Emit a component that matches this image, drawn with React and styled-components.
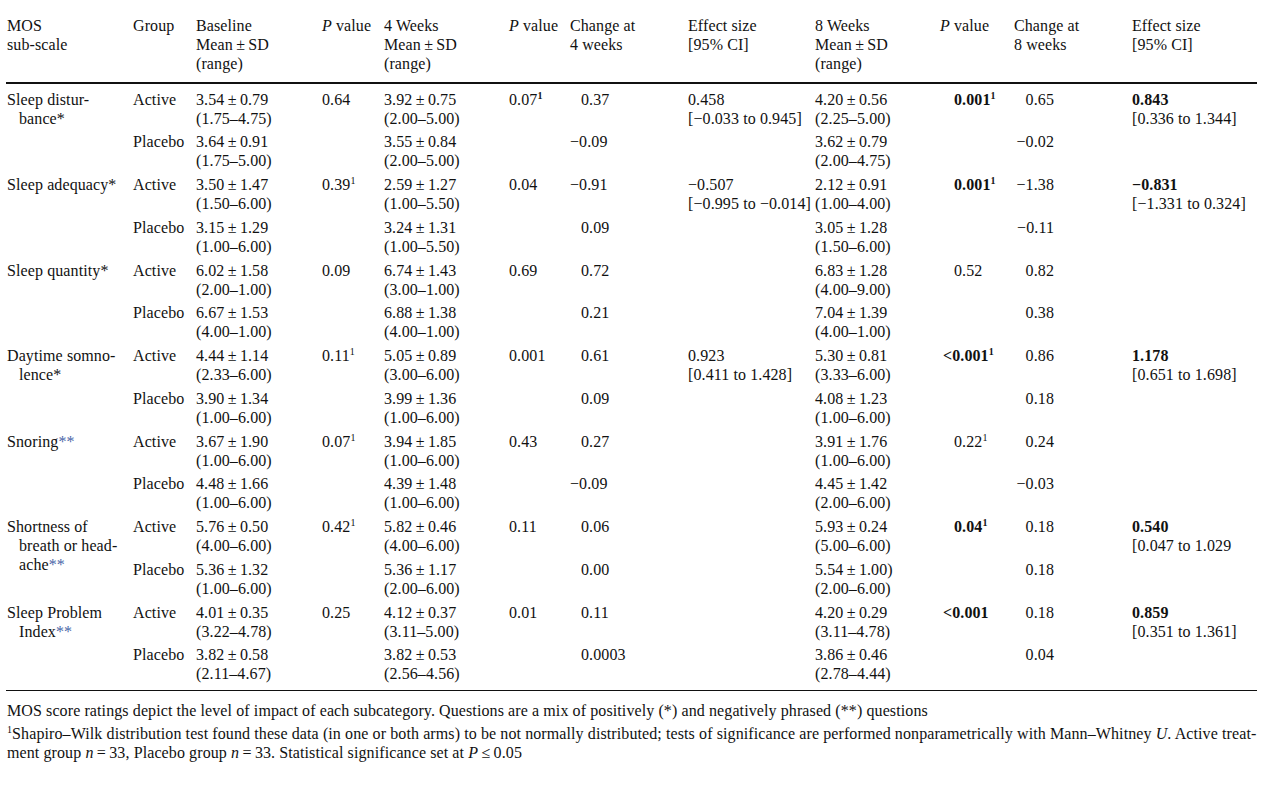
import React from "react";
import styled, { createGlobalStyle } from "styled-components";

const GlobalStyle = createGlobalStyle`
  body {
    margin: 0;
    background: #fff;
    color: #111;
    font-family: "Liberation Serif", "Times New Roman", serif;
    font-size: 16px;
    letter-spacing: 0.1px;
  }
`;

const COLS = "126px 63px 126px 62px 125px 61px 118px 127px 125px 74px 118px 125px";

const Page = styled.div`
  width: 1251px;
  padding: 15.5px 0 0 6px;
  line-height: 19px;
`;

const HeadRow = styled.div`
  display: grid;
  grid-template-columns: ${COLS};
  padding-bottom: 9.5px;
  border-bottom: 2px solid #111;
`;

const HeadCell = styled.div`
  padding-left: 1px;
  white-space: nowrap;
`;

const Body = styled.div`
  display: grid;
  grid-template-columns: ${COLS};
  grid-auto-rows: 42.77px;
  padding: 3.5px 0 4px;
  border-bottom: 1.2px solid #111;
`;

const Cell = styled.div`
  padding: 2px 0 0 ${(p) => p.$pl ?? 1}px;
  white-space: nowrap;
  font-weight: ${(p) => (p.$bold ? 700 : 400)};
  text-align: ${(p) => (p.$right ? "right" : "left")};
  padding-right: ${(p) => p.$pr ?? 0}px;
`;

const Measure = styled(Cell)`
  grid-row: span 2;
`;

const Indent = styled.span`
  display: block;
  padding-left: 12px;
`;

const Hang = styled.span`
  margin-left: ${(p) => p.$w}px;
`;

const Sup = styled.sup`
  font-size: 10px;
  line-height: 0;
  vertical-align: 6px;
  font-weight: ${(p) => (p.$bold ? 700 : 400)};
`;

const Stars = styled.span`
  color: #4a66a8;
`;

const Footer = styled.div`
  padding-top: 10px;
`;

const Note = styled.p`
  margin: 0 0 4px 1px;
  white-space: nowrap;
`;

const I = styled.i``;

const pm = (a, b) => `${a}\u2009±\u2009${b}`;

const data = [
  {
    name: ["Sleep distur-", "bance*"],
    rows: [
      {
        group: "Active", base: ["3.54", "0.79", "1.75–4.75"], bp: "0.64", bs: false,
        w4: ["3.92", "0.75", "2.00–5.00"], p4: "0.07", p4s: "b", c4: "0.37",
        es: ["0.458", "[−0.033 to 0.945]"],
        w8: ["4.20", "0.56", "2.25–5.00"], p8: "0.001", p8b: true, p8s: "b", c8: "0.65",
        es8: ["0.843", "[0.336 to 1.344]"],
      },
      {
        group: "Placebo", base: ["3.64", "0.91", "1.75–5.00"],
        w4: ["3.55", "0.84", "2.00–5.00"], c4: "−0.09",
        w8: ["3.62", "0.79", "2.00–4.75"], c8: "−0.02",
      },
    ],
  },
  {
    name: ["Sleep adequacy*"],
    rows: [
      {
        group: "Active", base: ["3.50", "1.47", "1.50–6.00"], bp: "0.39", bs: "n",
        w4: ["2.59", "1.27", "1.00–5.50"], p4: "0.04", c4: "−0.91",
        es: ["−0.507", "[−0.995 to −0.014]"],
        w8: ["2.12", "0.91", "1.00–4.00"], p8: "0.001", p8b: true, p8s: "b", c8: "−1.38",
        es8: ["−0.831", "[−1.331 to 0.324]"],
      },
      {
        group: "Placebo", base: ["3.15", "1.29", "1.00–6.00"],
        w4: ["3.24", "1.31", "1.00–5.50"], c4: "0.09",
        w8: ["3.05", "1.28", "1.50–6.00"], c8: "−0.11",
      },
    ],
  },
  {
    name: ["Sleep quantity*"],
    rows: [
      {
        group: "Active", base: ["6.02", "1.58", "2.00–1.00"], bp: "0.09",
        w4: ["6.74", "1.43", "3.00–1.00"], p4: "0.69", c4: "0.72",
        w8: ["6.83", "1.28", "4.00–9.00"], p8: "0.52", c8: "0.82",
      },
      {
        group: "Placebo", base: ["6.67", "1.53", "4.00–1.00"],
        w4: ["6.88", "1.38", "4.00–1.00"], c4: "0.21",
        w8: ["7.04", "1.39", "4.00–1.00"], c8: "0.38",
      },
    ],
  },
  {
    name: ["Daytime somno-", "lence*"],
    rows: [
      {
        group: "Active", base: ["4.44", "1.14", "2.33–6.00"], bp: "0.11", bs: "n",
        w4: ["5.05", "0.89", "3.00–6.00"], p4: "0.001", c4: "0.61",
        es: ["0.923", "[0.411 to 1.428]"],
        w8: ["5.30", "0.81", "3.33–6.00"], p8: "<0.001", p8b: true, p8s: "b", c8: "0.86",
        es8: ["1.178", "[0.651 to 1.698]"],
      },
      {
        group: "Placebo", base: ["3.90", "1.34", "1.00–6.00"],
        w4: ["3.99", "1.36", "1.00–6.00"], c4: "0.09",
        w8: ["4.08", "1.23", "1.00–6.00"], c8: "0.18",
      },
    ],
  },
  {
    name: ["Snoring**"],
    rows: [
      {
        group: "Active", base: ["3.67", "1.90", "1.00–6.00"], bp: "0.07", bs: "n",
        w4: ["3.94", "1.85", "1.00–6.00"], p4: "0.43", c4: "0.27",
        w8: ["3.91", "1.76", "1.00–6.00"], p8: "0.22", p8s: "n", c8: "0.24",
      },
      {
        group: "Placebo", base: ["4.48", "1.66", "1.00–6.00"],
        w4: ["4.39", "1.48", "1.00–6.00"], c4: "−0.09",
        w8: ["4.45", "1.42", "2.00–6.00"], c8: "−0.03",
      },
    ],
  },
  {
    name: ["Shortness of", "breath or head-", "ache**"],
    rows: [
      {
        group: "Active", base: ["5.76", "0.50", "4.00–6.00"], bp: "0.42", bs: "n",
        w4: ["5.82", "0.46", "4.00–6.00"], p4: "0.11", c4: "0.06",
        w8: ["5.93", "0.24", "5.00–6.00"], p8: "0.04", p8b: true, p8s: "b", c8: "0.18",
        es8: ["0.540", "[0.047 to 1.029"],
      },
      {
        group: "Placebo", base: ["5.36", "1.32", "1.00–6.00"],
        w4: ["5.36", "1.17", "2.00–6.00"], c4: "0.00",
        w8: ["5.54", "1.00)", "2.00–6.00"], c8: "0.18",
      },
    ],
  },
  {
    name: ["Sleep Problem", "Index**"],
    rows: [
      {
        group: "Active", base: ["4.01", "0.35", "3.22–4.78"], bp: "0.25",
        w4: ["4.12", "0.37", "3.11–5.00"], p4: "0.01", c4: "0.11",
        w8: ["4.20", "0.29", "3.11–4.78"], p8: "<0.001", p8b: true, c8: "0.18",
        es8: ["0.859", "[0.351 to 1.361]"],
      },
      {
        group: "Placebo", base: ["3.82", "0.58", "2.11–4.67"],
        w4: ["3.82", "0.53", "2.56–4.56"], c4: "0.0003",
        w8: ["3.86", "0.46", "2.78–4.44"], c8: "0.04",
      },
    ],
  },
];

const withStars = (text) => {
  const m = text.match(/^(.*?)(\*\*)$/);
  if (!m) return text;
  return (
    <>
      {m[1]}
      <Stars>{m[2]}</Stars>
    </>
  );
};

const MeasureName = ({ lines }) => (
  <Measure>
    {lines.map((l, i) =>
      i === 0 ? (
        <span key={i}>{withStars(l)}</span>
      ) : (
        <Indent key={i}>{withStars(l)}</Indent>
      )
    )}
  </Measure>
);

const MeanSd = ({ v }) => (
  <Cell>
    {pm(v[0], v[1])}
    <br />({v[2]})
  </Cell>
);

const PVal = ({ v, sup, bold, pl }) => (
  <Cell $bold={bold} $pl={pl}>
    {v && v.startsWith("<") ? (
      <>
        <Hang $w={-11}>&lt;</Hang>
        {v.slice(1)}
      </>
    ) : (
      v
    )}
    {sup && <Sup $bold={sup === "b"}>1</Sup>}
  </Cell>
);

const Change4 = ({ v }) => (
  <Cell $pl={v.startsWith("−") ? 1 : 12}>{v}</Cell>
);

const Effect = ({ v, bold }) => (
  <Cell>
    {v && (
      <>
        {bold ? <b>{v[0]}</b> : v[0]}
        <br />
        {v[1]}
      </>
    )}
  </Cell>
);

const Row = ({ r }) => (
  <>
    <Cell>{r.group}</Cell>
    <MeanSd v={r.base} />
    <PVal v={r.bp} sup={r.bs} />
    <MeanSd v={r.w4} />
    <PVal v={r.p4} sup={r.p4s} />
    <Change4 v={r.c4} />
    <Effect v={r.es} />
    <MeanSd v={r.w8} />
    <PVal v={r.p8} sup={r.p8s} bold={r.p8b} pl={15} />
    <Cell $right $pr={77}>{r.c8}</Cell>
    <Effect v={r.es8} bold />
  </>
);

const headers = [
  ["MOS", "sub-scale"],
  ["Group"],
  ["Baseline", "Mean\u2009±\u2009SD", "(range)"],
  ["P"],
  ["4 Weeks", "Mean\u2009±\u2009SD", "(range)"],
  ["P"],
  ["Change at", "4 weeks"],
  ["Effect size", "[95% CI]"],
  ["8 Weeks", "Mean\u2009±\u2009SD", "(range)"],
  ["P"],
  ["Change at", "8 weeks"],
  ["Effect size", "[95% CI]"],
];

const App = () => (
  <Page>
    <GlobalStyle />
    <HeadRow>
      {headers.map((h, i) => (
        <HeadCell key={i}>
          {h[0] === "P" ? (
            <>
              <I>P</I> value
            </>
          ) : (
            h.map((l, j) => (
              <React.Fragment key={j}>
                {j > 0 && <br />}
                {l}
              </React.Fragment>
            ))
          )}
        </HeadCell>
      ))}
    </HeadRow>
    <Body>
      {data.map((m, i) => (
        <React.Fragment key={i}>
          <MeasureName lines={m.name} />
          <Row r={m.rows[0]} />
          <Row r={m.rows[1]} />
        </React.Fragment>
      ))}
    </Body>
    <Footer>
      <Note>
        MOS score ratings depict the level of impact of each subcategory. Questions are a mix of
        positively (*) and negatively phrased (**) questions
      </Note>
      <Note>
        <Sup>1</Sup>Shapiro–Wilk distribution test found these data (in one or both arms) to be not
        normally distributed; tests of significance are performed nonparametrically with
        Mann–Whitney <I>U</I>. Active treat-
        <br />
        ment group <I>n</I>
        {"\u2009=\u200933, Placebo group "}
        <I>n</I>
        {"\u2009=\u200933. Statistical significance set at "}
        <I>P</I>
        {"\u2009≤\u20090.05"}
      </Note>
    </Footer>
  </Page>
);

export default App;
